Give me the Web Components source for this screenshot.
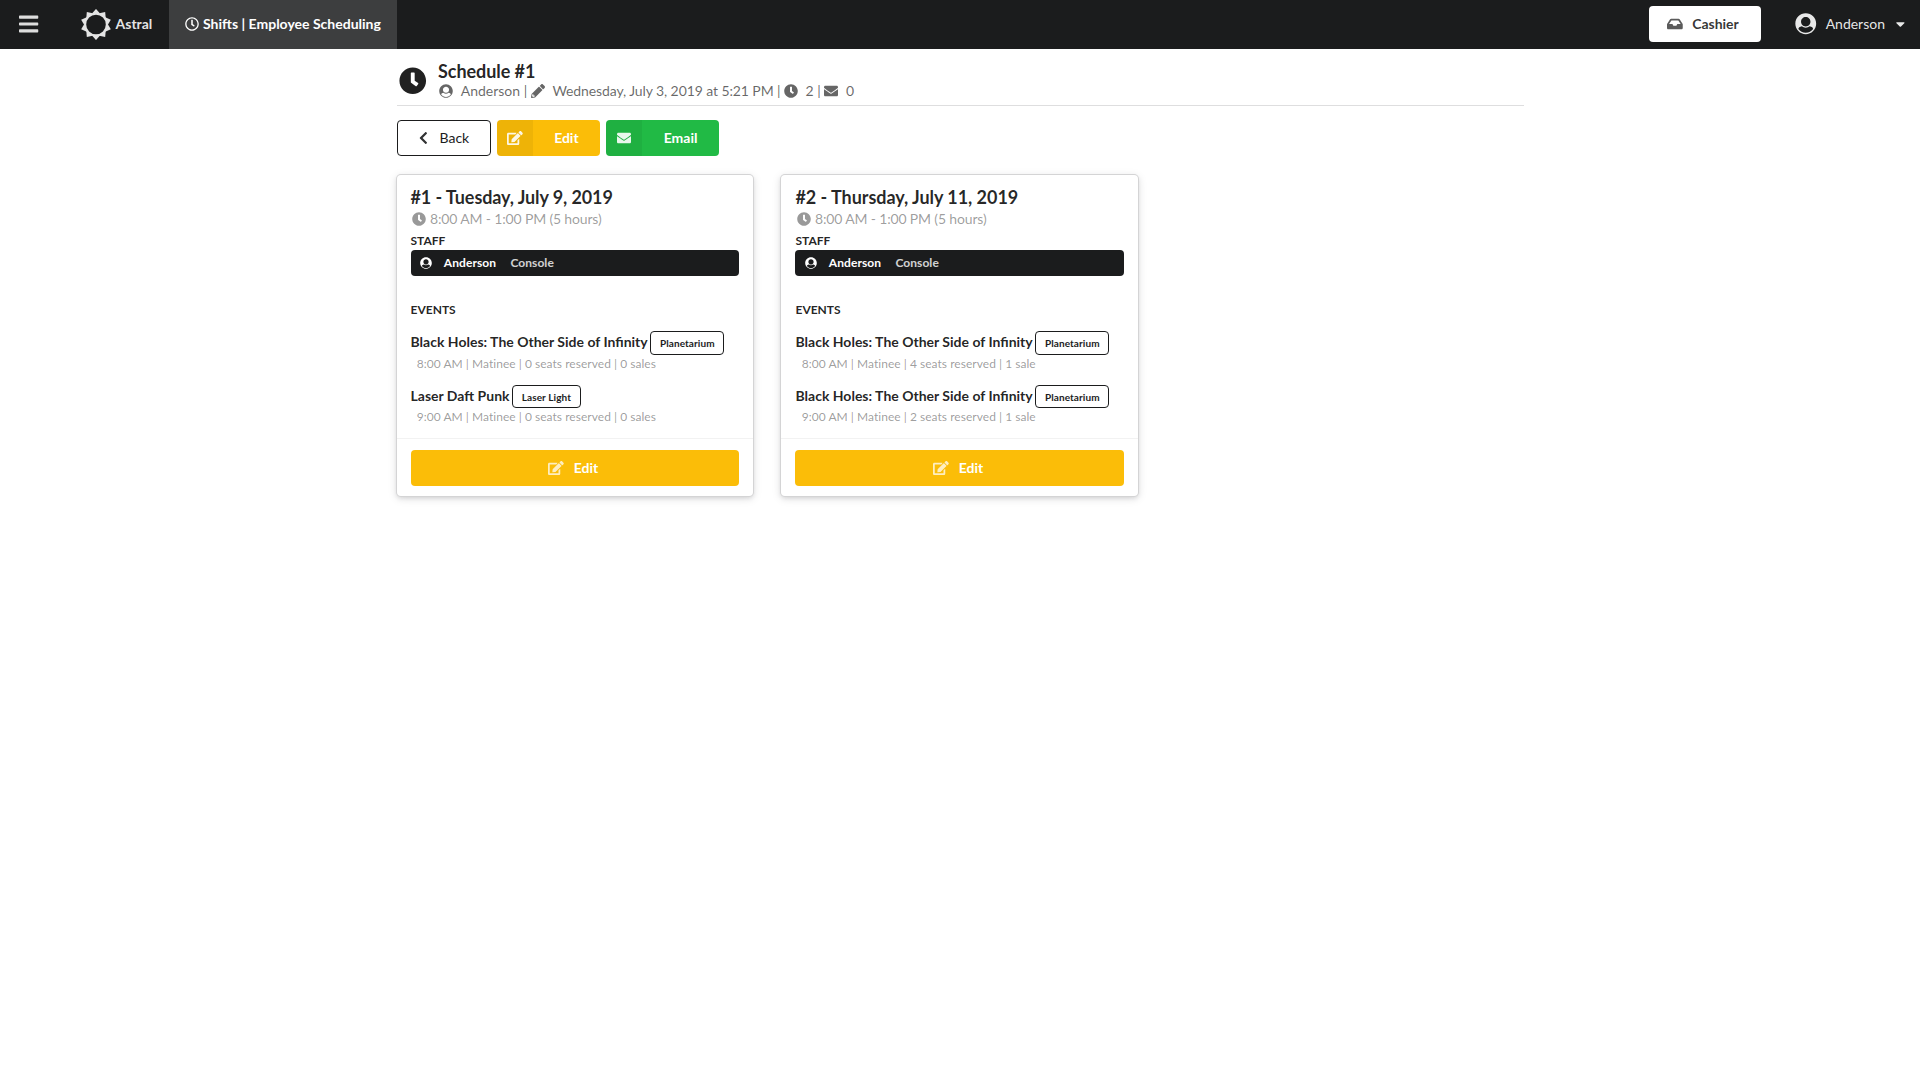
<!DOCTYPE html>
<html lang="en">
<head>
<meta charset="utf-8">
<title>Schedule #1</title>
<style>
html,body{margin:0;padding:0;background:#fff}
body{min-height:100vh;font-family:Lato,"Liberation Sans",sans-serif;font-size:14px;line-height:1.4285em;color:rgba(0,0,0,.87)}
</style>
</head>
<body>
<astral-app></astral-app>
<script>
const ICONS = {
  clock: ['0 0 512 512','M256 8C119 8 8 119 8 256s111 248 248 248 248-111 248-248S393 8 256 8zm57.1 350.1L224.9 294c-3.1-2.3-4.9-5.9-4.9-9.7V116c0-6.6 5.4-12 12-12h48c6.6 0 12 5.4 12 12v137.7l63.5 46.2c5.4 3.9 6.5 11.4 2.6 16.8l-28.2 38.8c-3.9 5.3-11.4 6.5-16.8 2.6z'],
  clockOutline: ['0 0 512 512','M256 8C119 8 8 119 8 256s111 248 248 248 248-111 248-248S393 8 256 8zm0 448c-110.5 0-200-89.5-200-200S145.5 56 256 56s200 89.5 200 200-89.5 200-200 200zm61.8-104.4l-84.9-61.7c-3.1-2.3-4.9-5.9-4.9-9.7V116c0-6.6 5.4-12 12-12h32c6.6 0 12 5.4 12 12v141.7l66.8 48.6c5.4 3.9 6.5 11.4 2.6 16.8L334.6 349c-3.9 5.3-11.4 6.5-16.8 2.6z'],
  user: ['0 0 512 512','M8 256C8 119.033 119.033 8 256 8s248 111.033 248 248-111.033 248-248 248S8 392.967 8 256zm72.455 125.868C119.657 436.446 183.673 472 256 472s136.343-35.554 175.545-90.132c-3.141-26.99-22.667-49.648-49.538-56.366l-32.374-8.093C323.565 339.79 290.722 352 256 352c-34.722 0-67.565-12.21-93.634-34.591l-32.374 8.093c-26.87 6.718-46.396 29.376-49.537 56.366zM144 208c0 61.856 50.144 112 112 112s112-50.144 112-112S317.856 96 256 96s-112 50.144-112 112z'],
  pencil: ['0 0 512 512','M497.9 142.1l-46.1 46.1c-4.7 4.7-12.3 4.7-17 0l-111-111c-4.7-4.7-4.7-12.3 0-17l46.1-46.1c18.7-18.7 49.1-18.7 67.9 0l60.1 60.1c18.8 18.7 18.8 49.1 0 67.9zM284.2 99.8L21.6 362.4.4 483.9c-2.9 16.4 11.4 30.6 27.8 27.8l121.5-21.3 262.6-262.6c4.7-4.7 4.7-12.3 0-17l-111-111c-4.8-4.7-12.4-4.7-17.1 0zM88 424h48v36.3l-64.5 11.3-31.1-31.1L51.7 376H88v48z'],
  edit: ['0 0 576 512','M402.6 83.2l90.2 90.2c3.8 3.8 3.8 10 0 13.8L274.4 405.6l-92.8 10.3c-12.4 1.4-22.9-9.1-21.5-21.5l10.3-92.8L388.8 83.2c3.8-3.8 10-3.8 13.8 0zm162-22.9l-48.8-48.8c-15.2-15.2-39.9-15.2-55.2 0l-35.4 35.4c-3.8 3.8-3.8 10 0 13.8l90.2 90.2c3.8 3.8 10 3.8 13.8 0l35.4-35.4c15.2-15.3 15.2-40 0-55.2zM384 346.2V448H64V128h229.8c3.2 0 6.2-1.3 8.5-3.5l40-40c7.6-7.6 2.2-20.5-8.5-20.5H48C21.5 64 0 85.5 0 112v352c0 26.5 21.5 48 48 48h352c26.5 0 48-21.5 48-48V306.2c0-10.7-12.9-16-20.5-8.5l-40 40c-2.2 2.3-3.5 5.3-3.5 8.5z'],
  mail: ['0 0 512 512','M502.3 190.8c3.9-3.1 9.7-.2 9.7 4.7V400c0 26.5-21.5 48-48 48H48c-26.5 0-48-21.5-48-48V195.6c0-5 5.7-7.8 9.7-4.7 22.4 17.4 52.1 39.5 154.1 113.6 21.1 15.4 56.7 47.8 92.2 47.6 35.7.3 72-32.8 92.3-47.6 102-74.1 131.6-96.3 154-113.7zM256 320c23.2.4 56.6-29.2 73.4-41.4 132.7-96.3 142.8-104.7 173.4-128.7 5.8-4.5 9.2-11.5 9.2-18.9v-19c0-26.5-21.5-48-48-48H48c-26.5 0-48 21.5-48 48v19c0 7.4 3.4 14.3 9.2 18.9 30.6 23.9 40.7 32.4 173.4 128.7 16.8 12.2 50.2 41.8 73.4 41.4z'],
  inbox: ['0 0 576 512','M567.938 243.908L462.25 85.374A48.003 48.003 0 0 0 422.311 64H153.689a48 48 0 0 0-39.938 21.374L8.062 243.908A47.994 47.994 0 0 0 0 270.533V400c0 26.51 21.49 48 48 48h480c26.51 0 48-21.49 48-48V270.533a47.994 47.994 0 0 0-8.062-26.625zM162.252 128h251.497l85.333 128H376l-32 64H232l-32-64H76.918l85.334-128z'],
  chevron: ['0 0 320 512','M34.52 239.03L228.87 44.69c9.37-9.37 24.57-9.37 33.94 0l22.67 22.67c9.36 9.36 9.37 24.52.04 33.9L131.49 256l154.02 154.75c9.34 9.38 9.32 24.54-.04 33.9l-22.67 22.67c-9.37 9.37-24.57 9.37-33.94 0L34.52 272.97c-9.37-9.37-9.37-24.57 0-33.94z'],
  bars: ['0 0 448 512','M16 132h416c8.837 0 16-7.163 16-16V76c0-8.837-7.163-16-16-16H16C7.163 60 0 67.163 0 76v40c0 8.837 7.163 16 16 16zm0 160h416c8.837 0 16-7.163 16-16v-40c0-8.837-7.163-16-16-16H16c-8.837 0-16 7.163-16 16v40c0 8.837 7.163 16 16 16zm0 160h416c8.837 0 16-7.163 16-16v-40c0-8.837-7.163-16-16-16H16c-8.837 0-16 7.163-16 16v40c0 8.837 7.163 16 16 16z'],
  caret: ['0 0 320 512','M31.3 192h257.3c17.8 0 26.7 21.5 14.1 34.1L174.1 354.8c-7.8 7.8-20.5 7.8-28.3 0L17.2 226.1C4.6 213.5 13.5 192 31.3 192z']
};
const RESET = '*{box-sizing:border-box}';
function define(name, render){
  customElements.define(name, class extends HTMLElement{
    connectedCallback(){
      if(this.shadowRoot) return;
      this.attachShadow({mode:'open'}).innerHTML = render(this);
    }
  });
}

/* Glyph in a fixed-width box, one em tall */
define('ui-icon', el => {
  const [vb,d] = ICONS[el.getAttribute('name')];
  return `<style>:host{display:inline-flex;width:1.18em;height:1em;align-items:center;justify-content:center;flex:none}
  svg{height:1em;width:auto;display:block;fill:currentColor;overflow:visible}</style>
  <svg viewBox="${vb}" aria-hidden="true"><path fill-rule="evenodd" d="${d}"/></svg>`;
});

define('sun-logo', () => {
  let rays = '';
  for(let i=0;i<10;i++) rays += `<path transform="rotate(${i*36})" d="M-4-11L0-15.6 4-11z"/>`;
  return `<style>:host{display:block;width:30px;height:31px}svg{display:block;fill:#e4e4e4}</style>
  <svg width="30" height="31" viewBox="-15 -15.5 30 31"><circle r="10.9" fill="none" stroke="#e4e4e4" stroke-width="2.2"/>${rays}</svg>`;
});

define('top-bar', () => `<style>${RESET}
  :host{display:flex;height:49px;background:#1b1c1d;color:rgba(255,255,255,.9);line-height:20px}
  div{display:flex;align-items:center}
  .menu,.brand,.tab,.right{height:49px;padding-bottom:1px}
  .menu{width:64px;padding-left:18.5px;font-size:22px;color:rgba(255,255,255,.85)}
  .menu ui-icon{width:20px}
  .brand{width:105px;padding-left:16.5px;gap:5px;font-weight:700}
  .tab{width:228px;background:#3d3e3f;color:#fff;font-weight:700;padding-left:15px;gap:2.5px}
  .right{margin-left:auto}
  .cash{width:112px;height:36px;background:#fff;border-radius:4px;color:rgba(0,0,0,.8);font-weight:700;padding-left:18px;gap:9px}
  .cash ui-icon{opacity:.8}
  .user{padding:0 11px 0 33px}
  .user .face{font-size:21.5px;width:24px;margin-right:8px}
  .user .arrow{margin-left:7.5px;margin-right:.5px;width:16px}
  </style>
  <div class="menu"><ui-icon name="bars"></ui-icon></div>
  <div class="brand"><sun-logo></sun-logo><span>Astral</span></div>
  <div class="tab"><ui-icon name="clockOutline"></ui-icon><span>Shifts | Employee Scheduling</span></div>
  <div class="right"><div class="cash"><ui-icon name="inbox"></ui-icon><span>Cashier</span></div>
  <div class="user"><ui-icon class="face" name="user"></ui-icon><span>Anderson</span><ui-icon class="arrow" name="caret"></ui-icon></div></div>`);

define('page-heading', () => `<style>${RESET}
  :host{display:flex;height:57px;border-bottom:1px solid rgba(34,36,38,.15)}
  .big{font-size:27.5px;width:32.5px;height:27.5px;margin-top:18px}
  .copy{padding:11px 0 0 8.7px}
  .title{font-size:18px;line-height:22px;font-weight:700;letter-spacing:-.06px;padding-left:.3px}
  .sub{display:flex;align-items:center;height:17px;line-height:17px;color:rgba(0,0,0,.6);white-space:pre}
  .sub ui-icon{margin-right:6.5px}
  .sub span+ui-icon{margin-left:-1.4px}
  .date{letter-spacing:-.095px}
  </style>
  <ui-icon class="big" name="clock"></ui-icon>
  <div class="copy"><div class="title">Schedule #1</div>
  <div class="sub"><ui-icon name="user"></ui-icon><span>Anderson | </span><ui-icon name="pencil"></ui-icon><span class="date">Wednesday, July 3, 2019 at 5:21 PM | </span><ui-icon name="clock"></ui-icon><span>2 | </span><ui-icon name="mail"></ui-icon><span>0</span></div></div>`);

define('ui-button', el => `<style>${RESET}
  :host{display:flex;height:36px;border-radius:4px;overflow:hidden;line-height:14px;font-weight:700;color:#fff;background:var(--fill,#fbbd08)}
  .i{display:flex;align-items:center;justify-content:center;width:36px;background:rgba(0,0,0,.05)}
  .t{flex:1;display:flex;align-items:center;justify-content:center;padding-left:.4px}
  ui-icon{opacity:.9}
  :host([kind=back]){border:1px solid #1b1c1d;background:#fff;color:#1b1c1d;font-weight:400}
  :host([kind=back]) .i{background:none;width:34px;padding-left:18px}
  :host([kind=back]) .t{justify-content:flex-start;padding-left:8px}
  :host([kind=fluid]){justify-content:center;padding-right:4px}
  :host([kind=fluid]) .i{background:none;width:17px}
  :host([kind=fluid]) ui-icon{opacity:.75}
  :host([kind=fluid]) .t{flex:none;margin-left:8.5px}
  </style><span class="i"><ui-icon name="${el.getAttribute('icon')}"></ui-icon></span><span class="t"><slot></slot></span>`);

define('staff-row', el => `<style>${RESET}
  :host{display:flex;align-items:center;height:26px;border-radius:4px;background:#1b1c1d;color:#fff;font-size:12px;line-height:12px;font-weight:700;letter-spacing:.06px;padding-left:8px}
  ui-icon{margin-right:11.2px}.role{margin-left:14.4px;opacity:.8}
  </style><ui-icon name="user"></ui-icon><span><slot></slot></span><span class="role">${el.getAttribute('role-name')}</span>`);

define('event-item', el => `<style>${RESET}
  :host{display:block;height:53.5px}
  .top{display:flex;height:23.5px;gap:2.7px;font-weight:700}
  .name{line-height:22px}
  .tag{height:23.5px;border:1px solid #1b1c1d;border-radius:4px;font-size:10px;line-height:23px;letter-spacing:.08px;padding:0 8.6px;color:#1b1c1d}
  .meta{font-size:12px;line-height:16px;letter-spacing:.035px;color:rgba(0,0,0,.4);padding:1px 0 0 6.2px}
  </style><div class="top"><span class="name"><slot></slot></span><span class="tag">${el.getAttribute('tag')}</span></div>
  <div class="meta">${el.getAttribute('meta')}</div>`);

define('shift-card', el => `<style>${RESET}
  :host{display:block;width:calc(33.33333% - 28px);margin:0 14px;height:321px;border-radius:4px;background:#fff;box-shadow:0 0 0 1px #d4d4d5,0 2px 4px 0 rgba(34,36,38,.12),0 2px 10px 0 rgba(34,36,38,.15)}
  .body{height:263px;padding:11px 14px 0}
  .title{font-size:18px;line-height:22px;font-weight:700;letter-spacing:var(--title-tracking,-.05px);color:rgba(0,0,0,.85)}
  .time{display:flex;align-items:center;height:20px;margin-top:1px;color:rgba(0,0,0,.4);gap:3px;letter-spacing:-.16px}
  h5{margin:0;font-size:12px;line-height:14px;font-weight:700}
  .staff{padding-top:5px}
  staff-row{margin-top:2px}
  .events{padding-top:27px}
  .list{padding-top:14px}
  .foot{border-top:1px solid rgba(0,0,0,.05);padding:11px 14px}
  </style>
  <div class="body"><div class="title">${el.getAttribute('heading')}</div>
  <div class="time"><ui-icon name="clock"></ui-icon><span>8:00 AM - 1:00 PM (5 hours)</span></div>
  <h5 class="staff">STAFF</h5><staff-row role-name="Console">Anderson</staff-row>
  <h5 class="events">EVENTS</h5><div class="list"><slot></slot></div></div>
  <div class="foot"><ui-button kind="fluid" icon="edit">Edit</ui-button></div>`);

define('astral-app', () => `<style>${RESET}
  :host{display:block;min-height:100vh}
  main{width:1127px;margin:0 auto}
  .actions{display:flex;gap:6.2px;padding-top:14px}
  .back{width:94px}.edit{width:103px}.mail{width:113px;--fill:#21ba45}
  .cards{display:flex;margin:19px -14px 0}
  .cards :first-child{--title-tracking:-.1px}
  </style>
  <top-bar></top-bar>
  <main><page-heading></page-heading>
  <div class="actions"><ui-button class="back" kind="back" icon="chevron">Back</ui-button><ui-button class="edit" icon="edit">Edit</ui-button><ui-button class="mail" icon="mail">Email</ui-button></div>
  <div class="cards">
    <shift-card heading="#1 - Tuesday, July 9, 2019">
      <event-item tag="Planetarium" meta="8:00 AM | Matinee | 0 seats reserved | 0 sales">Black Holes: The Other Side of Infinity</event-item>
      <event-item tag="Laser Light" meta="9:00 AM | Matinee | 0 seats reserved | 0 sales">Laser Daft Punk</event-item>
    </shift-card>
    <shift-card heading="#2 - Thursday, July 11, 2019">
      <event-item tag="Planetarium" meta="8:00 AM | Matinee | 4 seats reserved | 1 sale">Black Holes: The Other Side of Infinity</event-item>
      <event-item tag="Planetarium" meta="9:00 AM | Matinee | 2 seats reserved | 1 sale">Black Holes: The Other Side of Infinity</event-item>
    </shift-card>
  </div></main>`);
</script>
</body>
</html>
